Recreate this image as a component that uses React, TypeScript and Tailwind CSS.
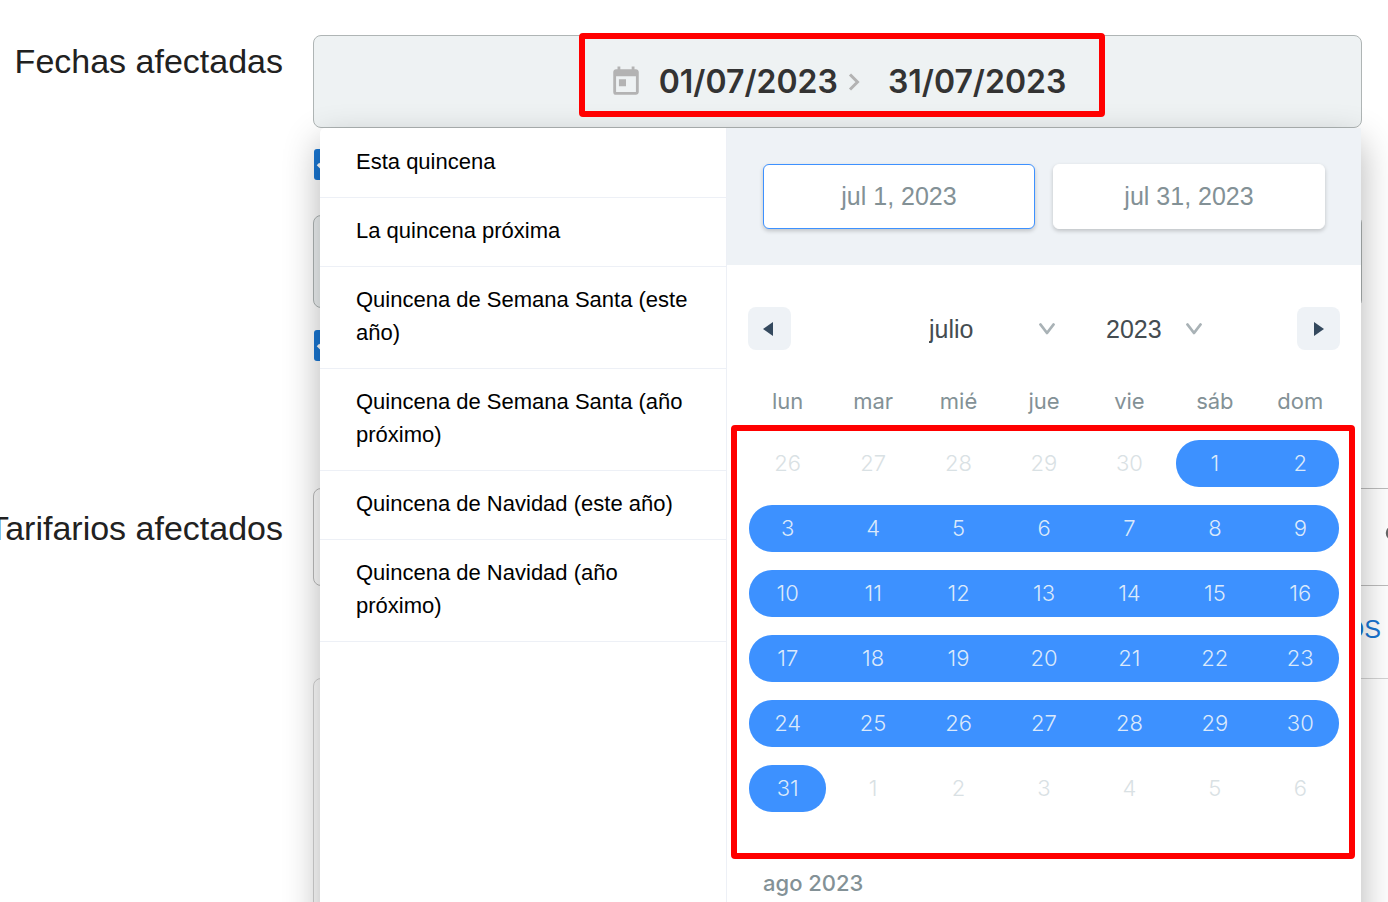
import React from 'react';
import { MdToday } from 'react-icons/md';

const presets = [
  'Esta quincena',
  'La quincena próxima',
  'Quincena de Semana Santa (este año)',
  'Quincena de Semana Santa (año próximo)',
  'Quincena de Navidad (este año)',
  'Quincena de Navidad (año próximo)',
];

const weekdays = ['lun', 'mar', 'mié', 'jue', 'vie', 'sáb', 'dom'];

// six full weeks, starting on the 26th of June
const weeks = [
  [26, 27, 28, 29, 30, 1, 2],
  [3, 4, 5, 6, 7, 8, 9],
  [10, 11, 12, 13, 14, 15, 16],
  [17, 18, 19, 20, 21, 22, 23],
  [24, 25, 26, 27, 28, 29, 30],
  [31, 1, 2, 3, 4, 5, 6],
];

function isSelected(week: number, day: number) {
  const n = week * 7 + day;
  return n >= 5 && n <= 35;
}

function dayClass(week: number, day: number) {
  if (!isSelected(week, day)) return 'text-[#d9e1e4]';
  const first = day === 0 || !isSelected(week, day - 1);
  const last = day === 6 || !isSelected(week, day + 1);
  return [
    'bg-[#3d91ff] text-[#dbe9fb]',
    first ? 'rounded-l-[23px] ml-1' : 'pl-1',
    last ? 'rounded-r-[23px] mr-1' : 'pr-1',
  ].join(' ');
}

function SelectArrow() {
  return (
    <svg className="pointer-events-none absolute right-0 top-1/2 -translate-y-1/2" width="18" height="12" viewBox="0 0 18 12" fill="none">
      <path d="M2.500 1.500L9 10L15.500 1.500" stroke="#a9b2b6" strokeWidth="2.8" strokeLinecap="round" strokeLinejoin="round" />
    </svg>
  );
}

function Checkbox({ label }: { label: string }) {
  return (
    <div className="relative h-[31px] w-[31px]">
      <input type="checkbox" defaultChecked aria-label={label} className="ml-px block h-[31px] w-[31px] appearance-none rounded-[3px] bg-[#1976d2]" />
      <svg className="pointer-events-none absolute inset-0" width="31" height="31" viewBox="0 0 31 31" fill="none">
        <path d="M5 15L12 22L26 8" stroke="white" strokeWidth="3.5" />
      </svg>
    </div>
  );
}

function DatePicker() {
  return (
    <div className="absolute left-[7px] right-px top-full z-10 flex min-h-[820px] rounded-tl-[5px] bg-white shadow-[0_14px_36px_rgba(0,0,0,0.3)]">
      {/* Presets */}
      <ul className="w-[407px] shrink-0 border-r border-[#edf0f6] pt-px">
        {presets.map((preset) => (
          <li key={preset} className="border-b border-[#edf0f6]">
            <button type="button" className="block w-full px-9 pb-[19px] pt-4 text-left text-[22px] leading-[33px] text-black">
              {preset}
            </button>
          </li>
        ))}
      </ul>

      {/* Calendar */}
      <div className="min-w-0 flex-1">
        <div className="flex gap-[18px] bg-[#eef2f6] p-9">
          <input
            type="text"
            readOnly
            aria-label="Fecha inicial"
            value="jul 1, 2023"
            className="h-[65px] w-full min-w-0 flex-1 rounded-[6px] border border-[#3d91ff] bg-white text-center text-[25px] text-[#839196] shadow-[0_2px_4px_rgba(0,0,0,0.2)] outline-none"
          />
          <input
            type="text"
            readOnly
            aria-label="Fecha final"
            value="jul 31, 2023"
            className="h-[65px] w-full min-w-0 flex-1 rounded-[6px] border border-white bg-white text-center text-[25px] text-[#839196] shadow-[0_2px_4px_rgba(0,0,0,0.2)] outline-none"
          />
        </div>

        <div className="flex items-center justify-between px-[21px] pt-[42px]">
          <button type="button" aria-label="Mes anterior" className="flex h-[43px] w-[43px] items-center justify-center rounded-[8px] bg-[#eef2f6] pr-1">
            <svg width="10" height="14" viewBox="0 0 10 14"><path d="M10 0v14L0 7z" fill="#34495e" /></svg>
          </button>
          <div className="flex items-center gap-[50px] pl-[44px] text-[25px] leading-[30px] text-[#444c51]">
            <div className="relative w-[127px]">
              <select aria-label="Mes" className="block w-full appearance-none bg-transparent outline-none">
                <option>julio</option>
              </select>
              <SelectArrow />
            </div>
            <div className="relative w-[97px]">
              <select aria-label="Año" className="block w-full appearance-none bg-transparent outline-none">
                <option>2023</option>
              </select>
              <SelectArrow />
            </div>
          </div>
          <button type="button" aria-label="Mes siguiente" className="flex h-[43px] w-[43px] items-center justify-center rounded-[8px] bg-[#eef2f6]">
            <svg width="10" height="14" viewBox="0 0 10 14"><path d="M0 0v14L10 7z" fill="#34495e" /></svg>
          </button>
        </div>

        <table className="mx-[18px] mt-[35px] block font-[Inter,sans-serif] text-[22px]">
          <thead className="block">
            <tr className="grid grid-cols-7">
              {weekdays.map((name) => (
                <th key={name} scope="col" className="text-center font-normal leading-[32px] text-[#839196]">{name}</th>
              ))}
            </tr>
          </thead>
          <tbody className="mt-[23px] grid gap-[18px]">
            {weeks.map((week, w) => (
              <tr key={w} className="grid grid-cols-7">
                {week.map((day, d) => (
                  <td key={d} className={`h-[47px] text-center font-light leading-[47px] ${dayClass(w, d)}`}>{day}</td>
                ))}
              </tr>
            ))}
          </tbody>
        </table>

        <h3 className="ml-9 mt-[55px] font-[Inter,sans-serif] text-[22px] font-medium leading-[32px] text-[#839196]">ago 2023</h3>
      </div>

      {/* Highlight over the days */}
      <div className="pointer-events-none absolute left-[411px] right-[6px] top-[297px] h-[434px] rounded-[4px] border-6 border-[#ff0000]" />
    </div>
  );
}

export default function App() {
  return (
    <div className="h-screen overflow-hidden bg-white pt-[35px] font-['Liberation_Sans',Arial,sans-serif] text-[#212121]">
      <div className="grid grid-cols-[283px_minmax(0,1fr)] gap-x-[30px]">
        {/* Fechas */}
        <div className="pt-[6px] text-right text-[34px] leading-[40px]">Fechas afectadas</div>
        <div className="mb-[127px] mr-[26px] flex flex-col">
          <div className="relative">
            <button type="button" className="flex h-[93px] w-full items-center justify-center rounded-[8px] border border-[#afb5b5] bg-[#eef2f3] font-[Inter,sans-serif] text-[32px] font-semibold leading-[48px] text-[#333333]">
              <span className="relative flex items-center">
                <MdToday className="mr-4 h-[34px] w-[34px] text-[#b3b3b3]" />
                <span>01/07/2023</span>
                <svg className="ml-[10px] mr-[26px]" width="14" height="18" viewBox="0 0 14 18" fill="none">
                  <path d="M2 1.500L9.500 9L2 16.500" stroke="#b3b3b3" strokeWidth="3" />
                </svg>
                <span>31/07/2023</span>
                <span className="pointer-events-none absolute -bottom-[11px] -left-[30px] -right-[39px] -top-[25px] z-20 rounded-[4px] border-6 border-[#ff0000]" />
              </span>
            </button>
            <DatePicker />
          </div>
          <div className="mt-[21px]"><Checkbox label="Primera fecha" /></div>
          <div className="mt-[35px] h-[93px] rounded-[8px] border border-[#afb5b5] bg-[#eef2f3]" />
          <div className="mt-[22px]"><Checkbox label="Segunda fecha" /></div>
        </div>

        {/* Tarifarios */}
        <div className="flex justify-end whitespace-nowrap pt-5 text-[34px] leading-[40px]">Tarifarios afectados</div>
        <div>
          <div className="-mr-10 flex h-[98px] items-center justify-end rounded-[8px] border border-[#bcbcbc] pr-[25px]">
            <svg width="18" height="18" viewBox="0 0 18 18" fill="none">
              <circle cx="9" cy="5" r="6" stroke="#666666" strokeWidth="2.5" />
            </svg>
          </div>
          <div className="flex justify-end pr-[7px] pt-[27px]">
            <a href="#todos" className="text-[25px] leading-[32px] text-[#1976d2]">TODOS</a>
          </div>
          <div className="-mr-10 mt-[33px] h-[300px] rounded-[8px] border border-[#d4d4d4]" />
        </div>
      </div>
    </div>
  );
}
